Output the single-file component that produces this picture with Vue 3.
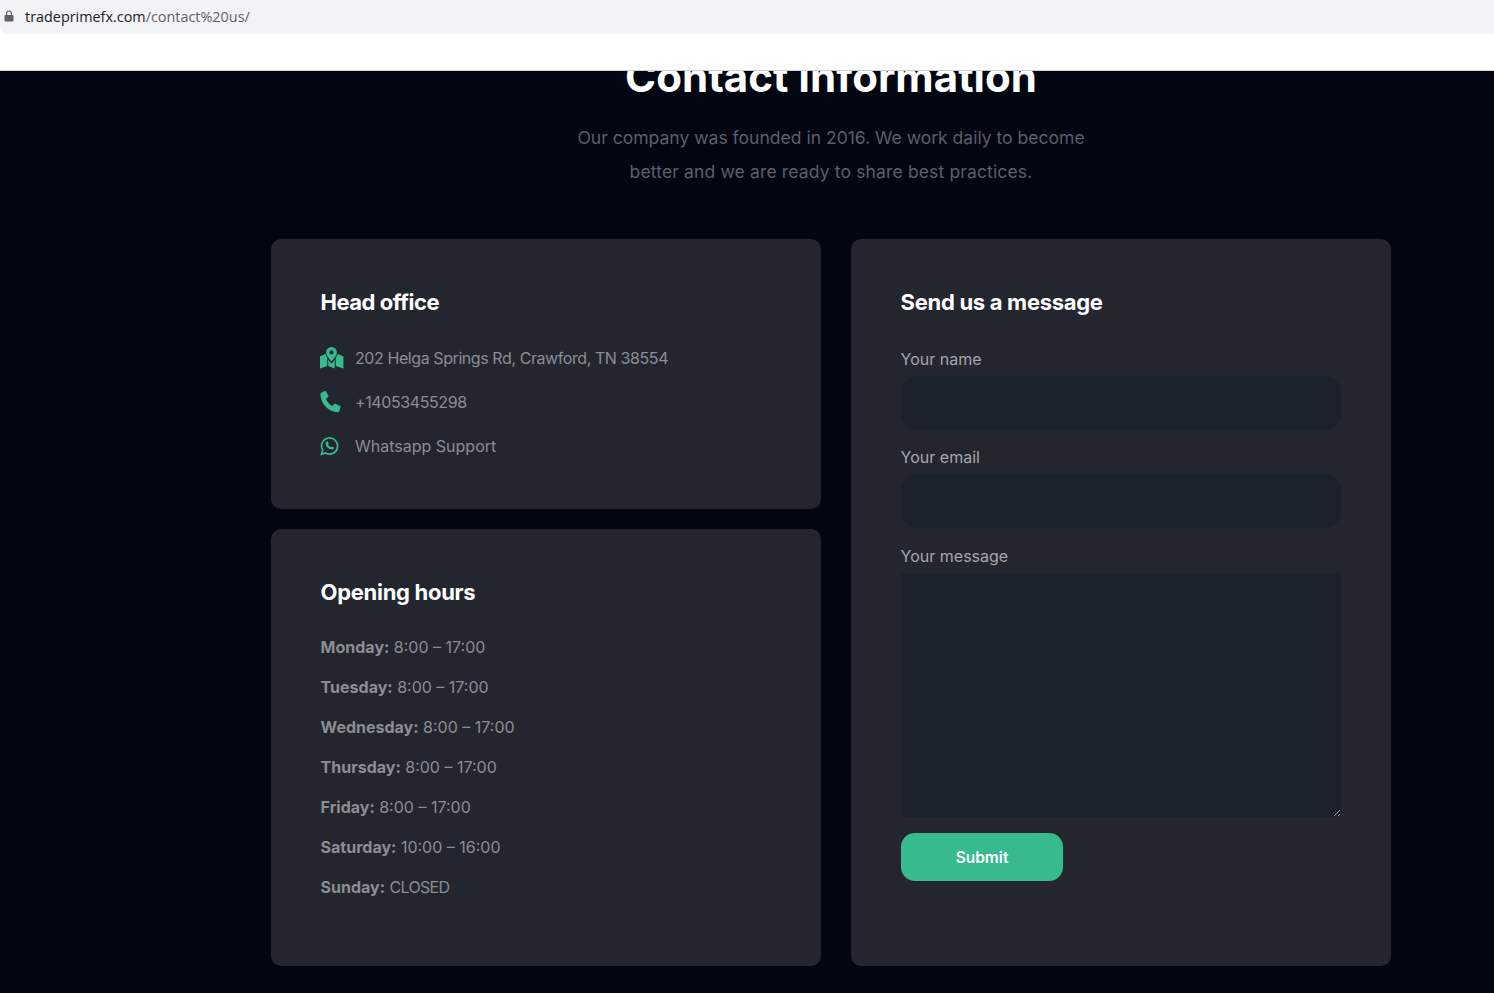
<template>
  <div class="page">
    <header class="browser-top">
      <div class="address-bar">
        <svg class="lock" width="10" height="12" viewBox="0 0 10 12"><path fill="#5f6368" d="M2 5V3.400a3 3 0 0 1 6 0V5h.6c.5 0 .9.4.9.9v4.700c0 .5-.4.9-.9.9H1.400c-.5 0-.9-.4-.9-.9V5.900c0-.5.4-.9.9-.9H2zm1.200 0h3.600V3.400a1.800 1.800 0 0 0-3.600 0V5z"/></svg>
        <span class="url">tradeprimefx.com<span class="url-path">/contact%20us/</span></span>
      </div>
      <div class="nav-strip"></div>
    </header>

    <main class="content">
      <section class="intro">
        <h1>Contact Information</h1>
        <p>Our company was founded in 2016. We work daily to become<br><span class="second-line">better and we are ready to share best practices.</span></p>
      </section>

      <div class="columns">
        <div class="left-col">
          <div class="card office-card">
            <h2>Head office</h2>
            <ul class="contact-list">
              <li>
                <svg class="map-icon" width="24" height="22" viewBox="0 0 24 22">
                  <path fill="#36ba8e" fill-rule="evenodd" d="M11.500 0a5.400 5.400 0 0 0-5.400 5.400c0 2.700 3.400 6.600 5.400 9.100 2-2.500 5.400-6.400 5.400-9.100A5.400 5.400 0 0 0 11.500 0zm0 3.300a2.100 2.100 0 1 1 0 4.200 2.100 2.100 0 0 1 0-4.200z"/>
                  <path fill="#36ba8e" d="M0 9.200 5.600 7c.7 2.500 1.300 3.400 1.700 4.200V19L0 21.500zM8.300 12.500c1 1.600 2.100 3 3.200 4.300 1.100-1.300 2.200-2.700 3.200-4.300V21.500L8.300 19zM15.700 11.200c.4-.8 1-1.700 1.700-4.200l6 2.200v12.300L15.700 19z"/>
                </svg>
                <span class="address">202 Helga Springs Rd, Crawford, TN 38554</span>
              </li>
              <li>
                <svg width="24" height="22" viewBox="0 0 24 22"><path fill="#36ba8e" transform="scale(1.1)" d="M1 1.600 4.400 0c.5-.2 1 0 1.200.4l2 3.900c.2.400.1.900-.3 1.200L5.500 7c.9 2.800 3 5.200 5.800 6.600l1.700-1.800c.3-.3.800-.4 1.200-.2l4 2c.4.200.6.700.5 1.200l-1.200 3.700c-.2.500-.6.800-1.100.8C7.800 19.200.4 11.600.4 2.500c0-.4.200-.7.600-.9z"/></svg>
                <span class="phone">+14053455298</span>
              </li>
              <li>
                <svg width="24" height="20" viewBox="0 0 24 20"><path fill="none" stroke="#36ba8e" stroke-width="1.700" d="M1.500 18.300l1.200-4.200a8 8 0 1 1 3 2.900z"/><path fill="#36ba8e" d="M6.500 5.700c.3-.4.900-.5 1.200-.2l.9 1.900c.1.300-.4.800-.7 1.200.6 1.200 1.600 2.100 2.900 2.700.4-.4.800-1 1.100-.9l2 1c.2.700-.4 2-1.900 2.100-3.200 0-6.900-3.300-6.300-6.500.1-.5.400-1 .8-1.300z"/></svg>
                <span>Whatsapp Support</span>
              </li>
            </ul>
          </div>

          <div class="card hours-card">
            <h2>Opening hours</h2>
            <ul class="hours-list">
              <li v-for="row in hours" :key="row.day">
                <strong>{{ row.day }}:</strong> <span :class="{ closed: row.time === 'CLOSED' }">{{ row.time }}</span>
              </li>
            </ul>
          </div>
        </div>

        <form class="card message-card" @submit.prevent>
          <h2>Send us a message</h2>
          <label for="f-name">Your name</label>
          <input id="f-name" type="text">
          <label for="f-email">Your email</label>
          <input id="f-email" type="email">
          <label for="f-message" class="message-label">Your message</label>
          <textarea id="f-message"></textarea>
          <button type="submit">Submit</button>
        </form>
      </div>
    </main>
  </div>
</template>

<script setup>
const hours = [
  { day: 'Monday', time: '8:00 – 17:00' },
  { day: 'Tuesday', time: '8:00 – 17:00' },
  { day: 'Wednesday', time: '8:00 – 17:00' },
  { day: 'Thursday', time: '8:00 – 17:00' },
  { day: 'Friday', time: '8:00 – 17:00' },
  { day: 'Saturday', time: '10:00 – 16:00' },
  { day: 'Sunday', time: 'CLOSED' }
]
</script>

<style>
html, body { background: #020611; overflow: hidden; }
</style>

<style scoped>
.page {
  height: 993px;
  overflow: hidden;
  display: flex;
  flex-direction: column;
  background: #020611;
  font-family: Inter, "Liberation Sans", sans-serif;
}

.browser-top {
  flex: none;
  background: #fff;
}

.address-bar {
  height: 34px;
  box-sizing: border-box;
  padding-left: 4px;
  display: flex;
  align-items: center;
  gap: 11px;
  background: #f1f3f4;
  border-radius: 0 0 0 8px;
}

.lock { margin-bottom: 2px; }

.url {
  font-family: "Open Sans", sans-serif;
  font-size: 14.4px;
  color: #202124;
  margin-bottom: 1px;
}

.url-path { color: #5f6368; }

.nav-strip {
  height: 37px;
  box-sizing: border-box;
  border-bottom: 1px solid #d0d0d0;
}

.content {
  flex: 1;
  overflow: hidden;
}

.intro {
  width: 1122px;
  margin-left: 270px;
  text-align: center;
}

h1 {
  margin: -19px 0 0;
  font-size: 42px;
  line-height: 50px;
  font-weight: 700;
  color: #fff;
  letter-spacing: 0.03px;
}

.intro p {
  margin: 19px 0 0;
  font-size: 17.55px;
  line-height: 34px;
  color: #5b5f6a;
}

.second-line { letter-spacing: 0.13px; }

.columns {
  display: flex;
  gap: 30px;
  margin: 50px 0 0 271px;
}

.left-col {
  width: 550px;
  display: flex;
  flex-direction: column;
  gap: 20px;
}

.card {
  box-sizing: border-box;
  background: #24262f;
  border-radius: 10px;
  padding: 49px 50px 50px 49.6px;
}

.office-card { height: 270px; }
.hours-card { height: 437px; }

h2 {
  margin: 0;
  font-size: 22px;
  line-height: 28px;
  font-weight: 700;
  color: #fff;
  letter-spacing: -0.3px;
}

.office-card h2 { letter-spacing: -0.5px; }

ul {
  list-style: none;
  padding: 0;
  margin: 0;
}

.contact-list {
  margin: 20px 0 0 -0.6px;
}

.contact-list li {
  height: 44px;
  display: flex;
  align-items: center;
  gap: 11px;
  font-size: 16px;
  color: #8b8d94;
}

.address { letter-spacing: -0.42px; }
.phone { letter-spacing: -0.4px; }

.hours-list { margin-top: 21px; }

.hours-list li {
  height: 40px;
  line-height: 40px;
  font-size: 16px;
  color: #8b8d94;
}

.hours-list strong { font-weight: 700; }
.closed { letter-spacing: -0.7px; }

.message-card {
  width: 540px;
  height: 727px;
  padding-left: 50px;
  display: flex;
  flex-direction: column;
}

.message-card h2, label { margin-left: -0.4px; }

label {
  margin-top: 15px;
  font-size: 16px;
  line-height: 24px;
  color: #a4a6ac;
}

.message-card h2 + label { margin-top: 31px; }
.message-card .message-label { margin-top: 16px; }

input, textarea {
  display: block;
  box-sizing: border-box;
  width: 440px;
  margin-top: 5px;
  border: 0;
  background: #1c222c;
  outline: none;
}

input {
  height: 54px;
  border-radius: 16px;
}

textarea {
  height: 244px;
  border-radius: 4px;
}

button {
  width: 162px;
  height: 48px;
  margin-top: 16px;
  border: 0;
  border-radius: 14px;
  background: #36ba8e;
  color: #fff;
  font-family: inherit;
  font-size: 15.5px;
  font-weight: 600;
}
</style>
